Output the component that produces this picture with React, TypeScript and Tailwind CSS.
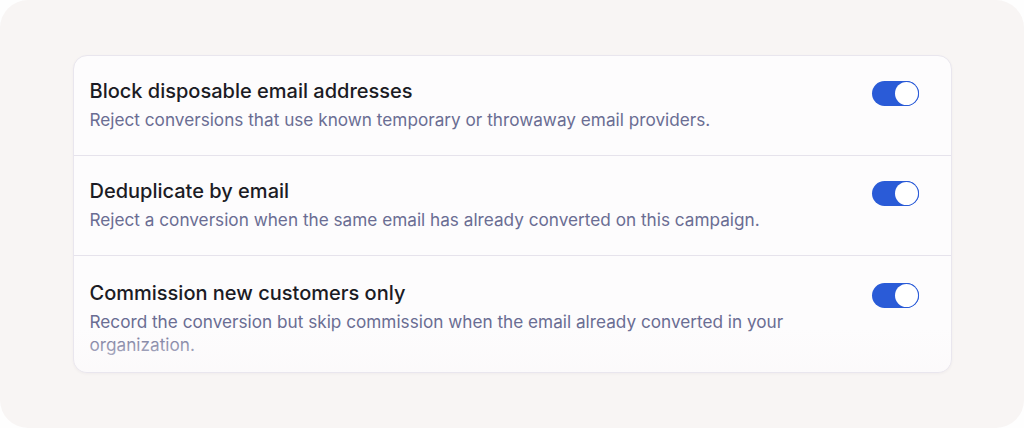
import React from "react";

const rules = [
  {
    title: "Block disposable email addresses",
    desc: "Reject conversions that use known temporary or throwaway email providers.",
  },
  {
    title: "Deduplicate by email",
    desc: "Reject a conversion when the same email has already converted on this campaign.",
  },
  {
    title: "Commission new customers only",
    desc: "Record the conversion but skip commission when the email already converted in your organization.",
  },
];

function Toggle() {
  return (
    <button
      type="button"
      role="switch"
      aria-checked="true"
      className="mt-[3px] flex h-[25px] w-[47px] shrink-0 items-center justify-end rounded-full bg-[#2a5bd7] p-[1px]"
    >
      <span className="block h-[23px] w-[23px] rounded-full bg-white ring-1 ring-[#2a5bd7]" />
    </button>
  );
}

export default function App() {
  return (
    <div className="h-[428px] w-[1024px] bg-[#fefefe]" style={{ fontFamily: "Inter, 'Noto Sans', sans-serif" }}>
      <div className="flex h-full w-full justify-center rounded-[28px] bg-[#f8f5f4] pt-[55px]">
        {/* Settings card */}
        <div className="relative h-[318px] w-[879px] overflow-hidden rounded-[14px] border border-[#e9e6ee] bg-[#fdfcfd] shadow-[0_1px_3px_rgba(40,30,60,0.04)]">
          {rules.map((r, i) => (
            <div
              key={i}
              className={`flex items-start gap-6 pl-[16px] pr-[32px] pb-[24px] ${
                i < rules.length - 1 ? "border-b border-[#e6e3ec] pt-[22px]" : "pt-[24px]"
              }`}
            >
              <div className="min-w-0 flex-1 pr-[56px]">
                <h3 className="text-[20px] font-medium leading-[26px] text-[#1b1b24]">{r.title}</h3>
                <p className="mt-[4px] text-[17.2px] leading-[23px] text-[#6a6d93]">{r.desc}</p>
              </div>
              <Toggle />
            </div>
          ))}

          {/* Bottom fade */}
          <div
            aria-hidden="true"
            className="pointer-events-none absolute inset-x-0 bottom-0 h-[44px] bg-gradient-to-b from-transparent to-[#fbf9fa]/70"
          />
        </div>
      </div>
    </div>
  );
}
